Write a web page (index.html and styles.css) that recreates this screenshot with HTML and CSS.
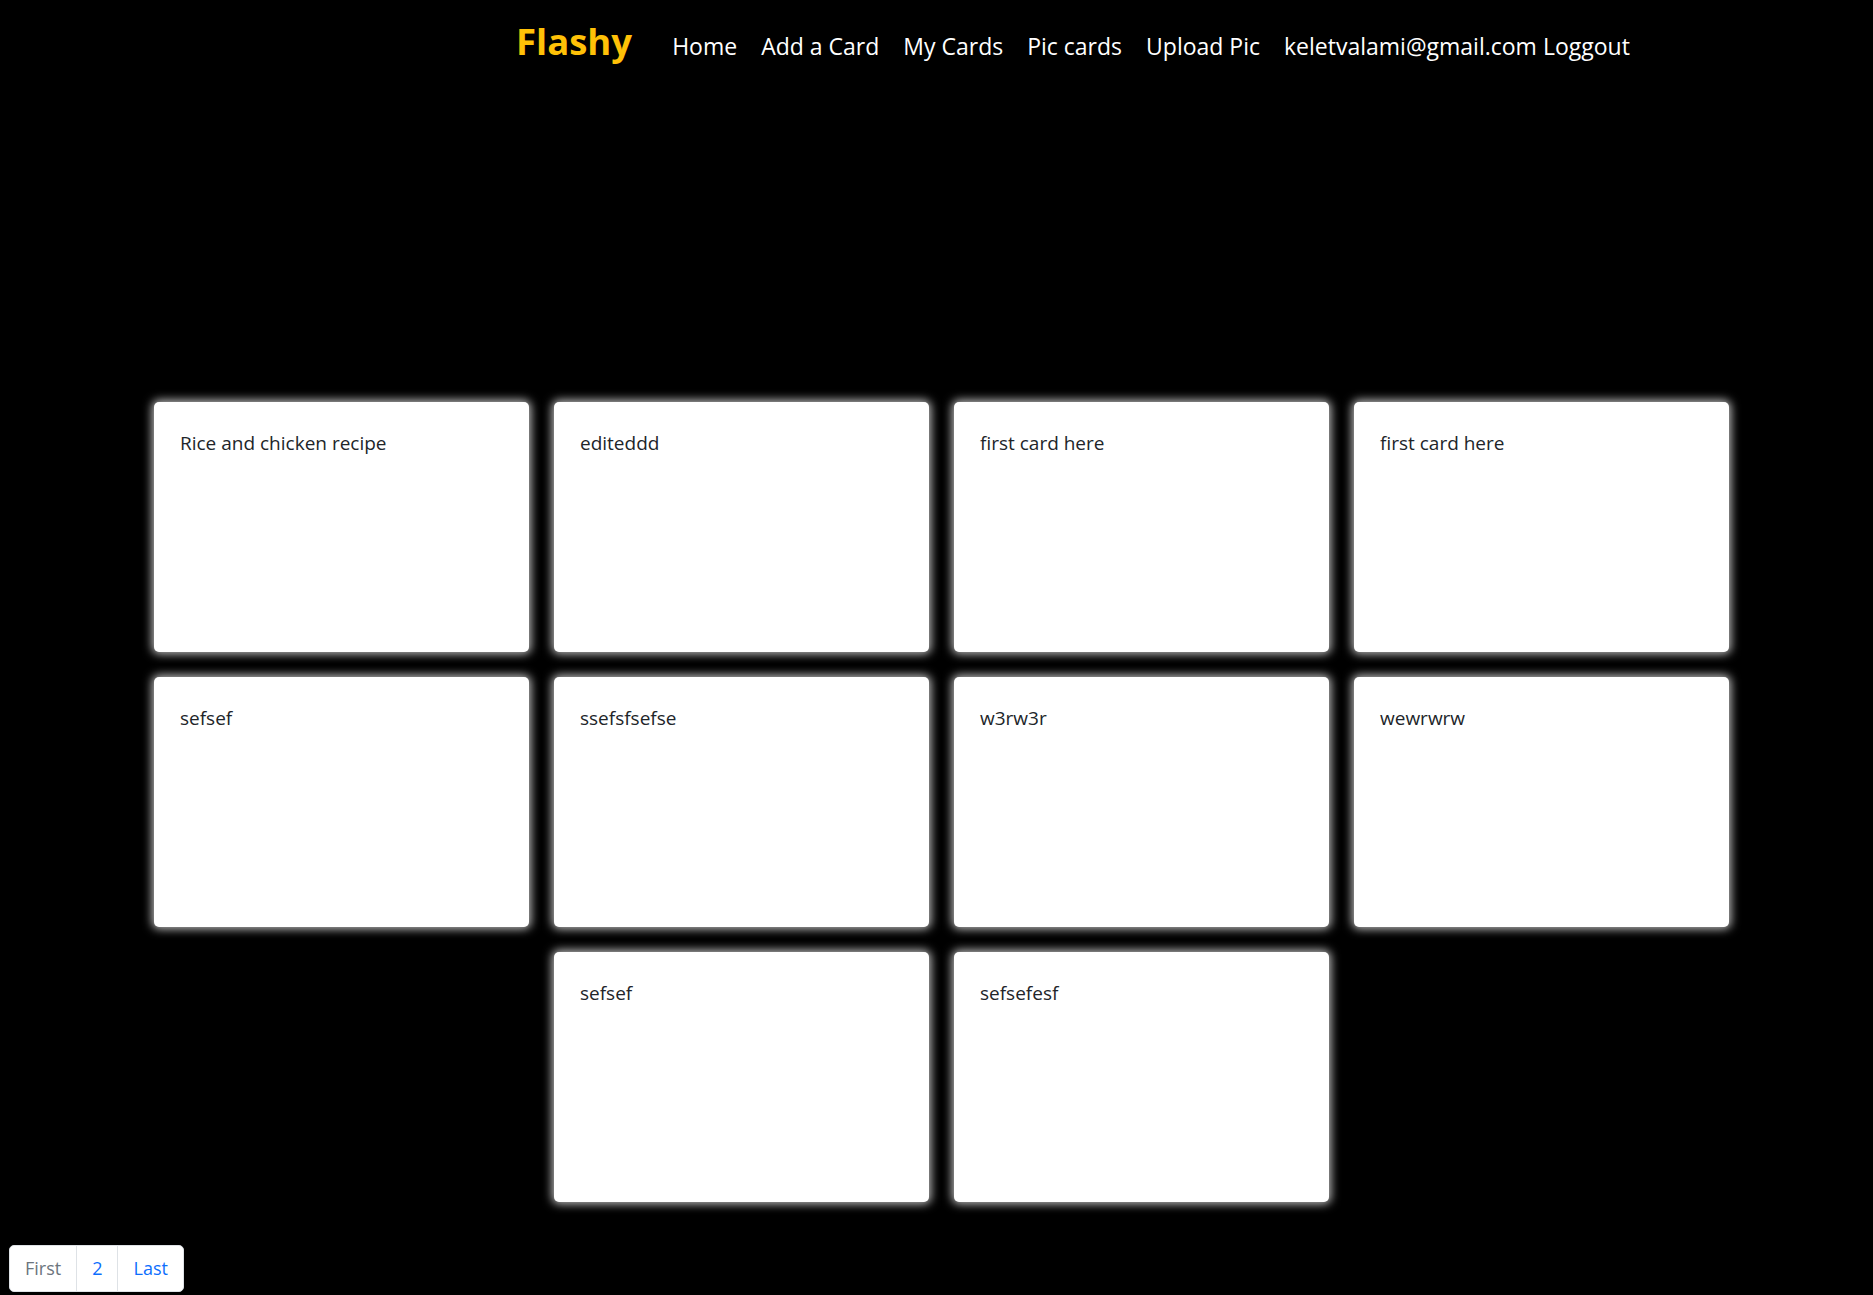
FILE: index.html
```html
<!DOCTYPE html>
<html lang="en">
<head>
<meta charset="utf-8">
<title>Flashy</title>
<link rel="stylesheet" href="styles.css">
</head>
<body>
<header class="navbar">
  <a class="brand" href="#">Flashy</a>
  <nav class="nav">
    <a class="nav-link" href="#">Home</a>
    <a class="nav-link" href="#">Add a Card</a>
    <a class="nav-link" href="#">My Cards</a>
    <a class="nav-link" href="#">Pic cards</a>
    <a class="nav-link" href="#">Upload Pic</a>
    <span class="nav-user"><span class="email">keletvalami@gmail.com</span> <a class="logout" href="#">Loggout</a></span>
  </nav>
</header>
<main class="cards">
  <div class="card"><p class="card-text">Rice and chicken recipe</p></div>
  <div class="card"><p class="card-text">editeddd</p></div>
  <div class="card"><p class="card-text">first card here</p></div>
  <div class="card"><p class="card-text">first card here</p></div>
  <div class="card"><p class="card-text">sefsef</p></div>
  <div class="card"><p class="card-text">ssefsfsefse</p></div>
  <div class="card"><p class="card-text">w3rw3r</p></div>
  <div class="card"><p class="card-text">wewrwrw</p></div>
  <div class="card"><p class="card-text">sefsef</p></div>
  <div class="card"><p class="card-text">sefsefesf</p></div>
</main>
<ul class="pagination">
  <li class="page-item disabled"><span class="page-link">First</span></li>
  <li class="page-item"><a class="page-link" href="#">2</a></li>
  <li class="page-item"><a class="page-link" href="#">Last</a></li>
</ul>
</body>
</html>
```
FILE: styles.css
```css
html, body {
  margin: 0;
  padding: 0;
  background: #000;
}
body {
  font-family: "Open Sans", "Noto Sans", sans-serif;
  color: #212529;
}
a { text-decoration: none; }

.navbar {
  display: flex;
  align-items: flex-start;
  padding-left: 516px;
  height: 402px;
  box-sizing: border-box;
}
.brand {
  color: #ffc107;
  font-weight: 700;
  font-size: 36.5px;
  line-height: 48px;
  margin-top: 17px;
}
.nav {
  display: flex;
  align-items: center;
  gap: 24px;
  margin-left: 40px;
  margin-top: 28px;
}
.nav-link, .nav-user, .logout {
  color: #fff;
  font-size: 23px;
  line-height: 36px;
  white-space: nowrap;
}

.cards {
  display: flex;
  flex-wrap: wrap;
  justify-content: center;
  gap: 25px;
  width: 1575px;
  margin-left: 154px;
}
.card {
  width: 375px;
  height: 250px;
  box-sizing: border-box;
  background: #fff;
  border-radius: 5px;
  box-shadow: 0 0 10px 2px rgba(255, 255, 255, 0.75);
  padding: 27px 26px 26px;
}
.card-text {
  margin: 0;
  font-size: 19px;
  line-height: 28px;
  color: #212529;
}

.pagination {
  display: flex;
  list-style: none;
  padding: 0;
  margin: 43px 0 0 9px;
}
.page-link {
  display: block;
  font-size: 18px;
  line-height: 27px;
  padding: 9px 15px;
  border: 1px solid #dee2e6;
  background: #fff;
  color: #0d6efd;
}
.page-item + .page-item .page-link { margin-left: -1px; }
.page-item:first-child .page-link { border-radius: 5px 0 0 5px; }
.page-item:last-child .page-link { border-radius: 0 5px 5px 0; }
.disabled .page-link { color: #6c757d; }
```
